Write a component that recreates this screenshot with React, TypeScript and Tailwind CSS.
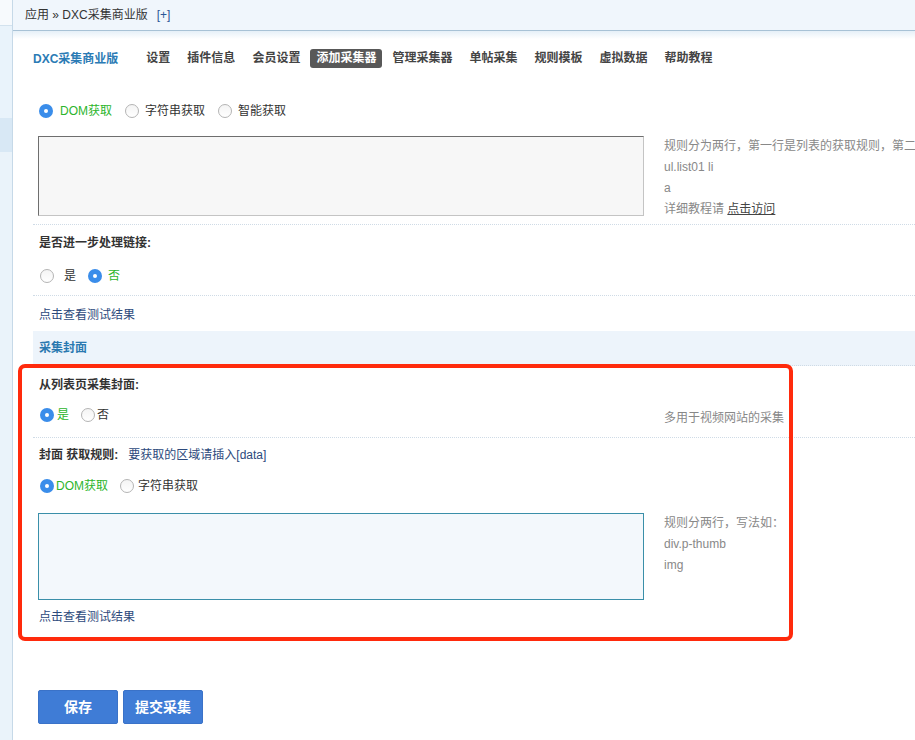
function Radio({ checked = false }: { checked?: boolean }) {
  if (checked) {
    return (
      <span className="inline-flex h-[14px] w-[14px] shrink-0 items-center justify-center rounded-full bg-[#3a8dea]">
        <span className="h-[4px] w-[4px] rounded-full bg-white" />
      </span>
    );
  }
  return (
    <span className="inline-block h-[14px] w-[14px] shrink-0 rounded-full border border-[#b4b4b4] bg-[linear-gradient(to_bottom,#f4f4f4,#ffffff)]" />
  );
}

const NAV = ["设置", "插件信息", "会员设置", "添加采集器", "管理采集器", "单帖采集", "规则模板", "虚拟数据", "帮助教程"];

const dotted = "border-b border-dotted border-[#cfdbe6]";

function Sidebar() {
  return (
    <aside className="flex w-[13px] shrink-0 flex-col border-r border-[#c6d9e8]">
      <div className="h-[26px] border-b border-[#d3e2ee] bg-[#f7fafd]" />
      <div className="h-[92px] bg-[#e9f3fb]" />
      <div className="h-[34px] bg-[#d8e8f5]" />
      <div className="flex-1 bg-[#eaf3fa]" />
    </aside>
  );
}

export default function App() {
  return (
    <div className="relative h-[740px] w-[915px] overflow-hidden bg-white font-['Liberation_Sans','Noto_Sans_CJK_SC',sans-serif] text-[12px] text-[#333]">
      <div className="flex h-full">
        <Sidebar />
        <main className="min-w-0 flex-1">
          <div className="h-[31px] border-b border-[#a8c2d6] bg-[#f0f6fc] pl-[12px] leading-[30px]">
            应用 » DXC采集商业版<span className="ml-[9px] text-[#2b5797]">[+]</span>
          </div>

          <div className="bg-[linear-gradient(to_bottom,#e6f0f8,#ffffff_8px)] pl-[20px] pt-[18px]">
            <nav className="flex h-[19px] items-center gap-[5px] whitespace-nowrap font-bold">
              <span className="mr-[17px] text-[#2b7bb5]">DXC采集商业版</span>
              {NAV.map((item) =>
                item === "添加采集器" ? (
                  <span key={item} className="-mx-px rounded-[3px] bg-[#585858] px-[6px] leading-[19px] text-white">
                    {item}
                  </span>
                ) : (
                  <span key={item} className="px-[6px] leading-[19px] text-[#444]">
                    {item}
                  </span>
                ),
              )}
            </nav>
          </div>

          <div className="mt-[33px] pl-[20px] leading-[20px]">
            {/* list rule */}
            <div className={`flex ${dotted}`}>
              <div className="w-[626px] shrink-0 pb-[8px] pl-[6px]">
                <div className="flex h-[20px] items-center">
                  <Radio checked />
                  <span className="ml-[7px] text-[#2cb52c]">DOM获取</span>
                  <span className="ml-[13px] flex"><Radio /></span>
                  <span className="ml-[6px]">字符串获取</span>
                  <span className="ml-[13px] flex"><Radio /></span>
                  <span className="ml-[6px]">智能获取</span>
                </div>
                <textarea
                  readOnly
                  className="mt-[15px] -ml-px block h-[80px] w-[606px] resize-none border border-t-[#6e6e6e] border-r-[#c4c4c4] border-b-[#c4c4c4] border-l-[#6e6e6e] bg-[#f7f7f7] outline-none"
                />
              </div>
              <div className="min-w-0 flex-1 overflow-hidden whitespace-nowrap pl-[5px] pt-[35px] leading-[21px] text-[#888]">
                <div>规则分为两行，第一行是列表的获取规则，第二</div>
                <div>ul.list01 li</div>
                <div>a</div>
                <div>
                  详细教程请 <span className="text-[#444] underline">点击访问</span>
                </div>
              </div>
            </div>

            {/* further link processing */}
            <div className={`flex ${dotted}`}>
              <div className="w-[626px] shrink-0 pb-[9px] pl-[6px] pt-[8px]">
                <div className="font-bold">是否进一步处理链接:</div>
                <div className="mt-[13px] flex h-[20px] items-center">
                  <span className="ml-px flex"><Radio /></span>
                  <span className="ml-[10px]">是</span>
                  <span className="ml-[12px] flex"><Radio checked /></span>
                  <span className="ml-[6px] text-[#2cb52c]">否</span>
                </div>
              </div>
              <div className="flex-1" />
            </div>

            <div className="pb-[6px] pl-[6px] pt-[9px] text-[#2d4a7c]">点击查看测试结果</div>

            <div className={`h-[35px] bg-[#edf4fb] pl-[6px] font-bold leading-[34px] text-[#2a79b0] ${dotted}`}>
              采集封面
            </div>

            {/* cover from list page */}
            <div className={`flex ${dotted}`}>
              <div className="w-[626px] shrink-0 pb-[12px] pl-[6px] pt-[9px]">
                <div className="font-bold">从列表页采集封面:</div>
                <div className="mt-[10px] flex h-[20px] items-center">
                  <span className="ml-px flex"><Radio checked /></span>
                  <span className="ml-[3px] text-[#2cb52c]">是</span>
                  <span className="ml-[12px] flex"><Radio /></span>
                  <span className="ml-[2px]">否</span>
                </div>
              </div>
              <div className="min-w-0 flex-1 whitespace-nowrap pl-[5px] pt-[42px] text-[#888]">多用于视频网站的采集</div>
            </div>

            {/* cover rule */}
            <div className="flex">
              <div className="w-[626px] shrink-0 pl-[6px] pt-[7px]">
                <div>
                  <span className="font-bold">封面 获取规则:</span>
                  <span className="ml-[10px] text-[#2d4a7c]">要获取的区域请插入[data]</span>
                </div>
                <div className="mt-[11px] flex h-[20px] items-center">
                  <span className="ml-px flex"><Radio checked /></span>
                  <span className="ml-[2px] text-[#2cb52c]">DOM获取</span>
                  <span className="ml-[12px] flex"><Radio /></span>
                  <span className="ml-[4px]">字符串获取</span>
                </div>
                <textarea
                  readOnly
                  className="mt-[17px] -ml-px block h-[87px] w-[606px] resize-none border border-[#3a8fa9] bg-[#f3f8fc] outline-none"
                />
                <div className="mt-[7px] text-[#2d4a7c]">点击查看测试结果</div>
              </div>
              <div className="min-w-0 flex-1 whitespace-nowrap pl-[5px] pt-[75px] leading-[21px] text-[#888]">
                <div>规则分两行，写法如：</div>
                <div>div.p-thumb</div>
                <div>img</div>
              </div>
            </div>

            <div className="ml-[5px] mt-[63px] flex gap-[5px]">
              <button className="h-[34px] w-[80px] rounded-[2px] border border-[#3a72c8] bg-[#3f7cd6] text-[14px] font-bold text-white">
                保存
              </button>
              <button className="h-[34px] w-[80px] rounded-[2px] border border-[#3a72c8] bg-[#3f7cd6] text-[14px] font-bold text-white">
                提交采集
              </button>
            </div>
          </div>
        </main>
      </div>

      {/* annotation frame */}
      <div className="pointer-events-none absolute left-[18px] top-[364px] h-[277px] w-[775px] rounded-[7px] border-4 border-[#ff2a0c]" />
    </div>
  );
}
